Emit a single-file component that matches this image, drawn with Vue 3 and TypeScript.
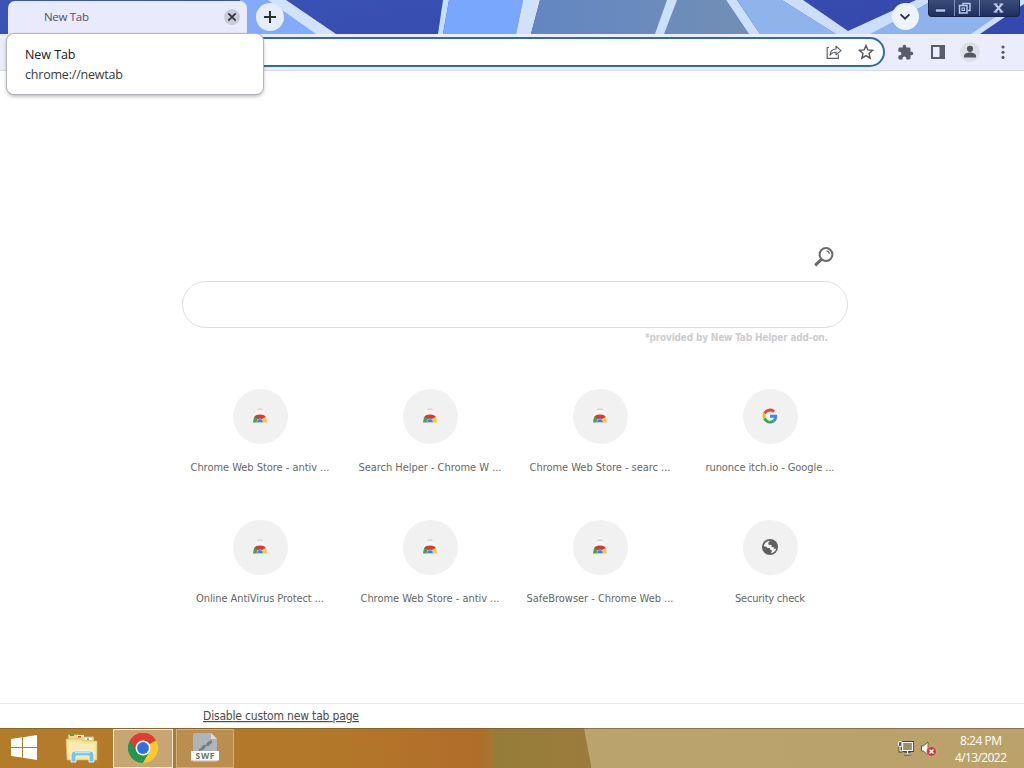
<script setup lang="ts">
type IconKind = 'store' | 'google' | 'globe'
interface Tile {
  label: string
  icon: IconKind
  width: number
}

const tiles: Tile[] = [
  { label: 'Chrome Web Store - antiv ...', icon: 'store', width: 139 },
  { label: 'Search Helper - Chrome W ...', icon: 'store', width: 143 },
  { label: 'Chrome Web Store - searc ...', icon: 'store', width: 141 },
  { label: 'runonce itch.io - Google ...', icon: 'google', width: 129 },
  { label: 'Online AntiVirus Protect ...', icon: 'store', width: 128 },
  { label: 'Chrome Web Store - antiv ...', icon: 'store', width: 139 },
  { label: 'SafeBrowser - Chrome Web ...', icon: 'store', width: 147 },
  { label: 'Security check', icon: 'globe', width: 70 },
]
</script>

<template>
  <div class="screen">
    <header class="strip">
      <svg class="wallpaper" width="1024" height="34" viewBox="0 0 1024 34">
        <defs>
          <linearGradient id="deep" x1="0" x2="1" y1="0" y2="0.2">
            <stop offset="0" stop-color="#3a55b4" />
            <stop offset="1" stop-color="#3648ad" />
          </linearGradient>
          <linearGradient id="slate" x1="0" x2="1" y1="0" y2="0">
            <stop offset="0" stop-color="#6386c2" />
            <stop offset="1" stop-color="#718fb5" />
          </linearGradient>
        </defs>
        <rect width="1024" height="34" fill="url(#deep)" />
        <path d="M240 0H275L320 34H240Z" fill="#83abfa" />
        <path d="M268 0H286L336 34H316Z" fill="#d0e2fc" />
        <path d="M443 0H449L443 34H438Z" fill="#c6defe" />
        <path d="M449 0H523L516 34H443Z" fill="#79a7fd" />
        <path d="M523 0H540L531 34H516Z" fill="#d1e0fb" />
        <path d="M540 0H726L749 34H531Z" fill="url(#slate)" />
        <path d="M667 0H677L664 34H655Z" fill="#cbe1fb" />
        <path d="M726 0H737L760 34H749Z" fill="#cbe1fb" />
        <path d="M737 0H782L836 34H760Z" fill="#8fb3eb" />
        <path d="M782 0H803L848 31L916 0H934L872 34H836Z" fill="#cbdffc" />
        <path d="M934 0H1024V0L973 34H870Z" fill="#8eb2ec" />
        <path d="M1020 0H1024V4L980 34H971Z" fill="#cbdffc" />
      </svg>
      <div class="tab">
        <span class="tab-title"><svg width="46" height="18"><text x="0" y="13" textLength="45">New Tab</text></svg></span>
        <span class="tab-close">
          <svg width="16" height="16" viewBox="0 0 16 16"><path d="M4.300 4.300l7.400 7.400M11.700 4.300l-7.400 7.400" stroke="#30313c" stroke-width="1.700" /></svg>
        </span>
      </div>
      <span class="new-tab">
        <svg width="28" height="28" viewBox="0 0 28 28"><path d="M14 8v12M8 14h12" stroke="#2b2e3b" stroke-width="2" /></svg>
      </span>
      <span class="strip-gap"></span>
      <span class="tab-search">
        <svg width="26" height="26" viewBox="0 0 26 26"><path d="M8.600 11.300l4.400 4.400 4.400-4.400" fill="none" stroke="#29303a" stroke-width="1.900" /></svg>
      </span>
      <div class="win-buttons">
        <span class="win-min"><svg width="25" height="16"><rect x="6.500" y="9" width="10" height="3" fill="#b3c6ec" stroke="#15203f" stroke-width=".5" /></svg></span>
        <span class="win-max"><svg width="24" height="16" fill="none" stroke="#b8c9ec" stroke-width="1.500"><path d="M8 5V3.500H15V10.500H13" /><rect x="4.500" y="5.500" width="7.500" height="7.500" /><rect x="7" y="8" width="2.500" height="2.500" stroke-width="1" /></svg></span>
        <span class="win-close"><svg width="40" height="16"><path d="M15 4l7 8M22 4l-7 8" stroke="#bdccee" stroke-width="2" /><path d="M13.500 4h4M19.500 4h4M13.500 12h4M19.500 12h4" stroke="#bdccee" stroke-width="1" /></svg></span>
      </div>
    </header>

    <div class="toolbar">
      <div class="omnibox">
        <svg width="16" height="16" viewBox="0 0 16 16" fill="none" stroke="#5f6368" stroke-width="1.200"><path d="M3 3.500H1.200V14.400H12.300V10.500" /><path d="M4 11C4.300 7.300 6.500 5.200 10 5V2.200L15 6.600 10 10.700V8C7.500 8 5.700 9 4 11Z" stroke-linejoin="round" /></svg>
        <svg class="star" width="16" height="16" viewBox="0 0 16 16"><path d="M8 1.500L9.850 5.900 14.700 6.300 11 9.450 12.150 14.200 8 11.650 3.850 14.200 5 9.450 1.300 6.300 6.150 5.900Z" fill="none" stroke="#50535b" stroke-width="1.400" /></svg>
      </div>
      <svg class="tool puzzle" width="17" height="17" viewBox="0 0 24 24"><path d="M20.500 11H19V7c0-1.100-.9-2-2-2h-4V3.500a2.500 2.500 0 0 0-5 0V5H4c-1.100 0-2 .9-2 2v3.800h1.500a2.700 2.700 0 0 1 0 5.400H2V20c0 1.100.9 2 2 2h3.800v-1.500a2.700 2.700 0 0 1 5.400 0V22H17c1.100 0 2-.9 2-2v-4h1.500a2.500 2.500 0 0 0 0-5z" fill="#5a5c69" /></svg>
      <svg class="tool" width="16" height="16" viewBox="0 0 16 16"><path d="M1 1h14v14H1zM3 3v10h6.500V3z" fill="#5a5c69" fill-rule="evenodd" /></svg>
      <span class="profile"><svg width="20" height="20" viewBox="0 0 20 20" fill="#535560"><circle cx="10" cy="6.800" r="3.100" /><path d="M4 15.500V14c0-2.300 3.500-3.400 6-3.400s6 1.100 6 3.400v1.500z" /></svg></span>
      <svg class="tool" width="6" height="16" viewBox="0 0 6 16" fill="#555762"><circle cx="3" cy="3" r="1.550" /><circle cx="3" cy="8.200" r="1.550" /><circle cx="3" cy="13.400" r="1.550" /></svg>
    </div>

    <main class="page">
      <section class="search">
        <div class="search-icon">
          <svg width="22" height="22" viewBox="0 0 22 22" fill="none" stroke="#696969"><circle cx="13" cy="8.500" r="6.400" stroke-width="2" /><path d="M8.500 13.200L2.200 19.400" stroke-width="3" /><path d="M13.500 5.200c1.700 0 2.700 1.100 2.800 2.700" stroke-width="1.200" /></svg>
        </div>
        <div class="search-box"></div>
        <div class="credit"><svg width="185" height="15"><text x="0" y="11" textLength="183">*provided by New Tab Helper add-on.</text></svg></div>
      </section>
      <section class="tiles">
        <div v-for="(tile, i) in tiles" :key="i" class="tile">
          <span class="disc">
            <svg v-if="tile.icon === 'store'" width="16" height="18" viewBox="0 0 16 18">
              <path d="M2.500 8.500L4.500 3h7l2 5.500z" fill="#faf5f5" />
              <path d="M5.500 3Q8 .8 10.500 3" fill="none" stroke="#ced1d3" stroke-width="1.200" />
              <path d="M2 10.500Q3 7.500 8 7.500T14 10.500L11 12H5z" fill="#d23d32" />
              <path d="M2.400 9.700Q1.200 12 1 15.500H6L5.500 11.500z" fill="#46a05a" />
              <path d="M13.700 10Q15 12 15 15.500H10L10.500 11.500z" fill="#f5ca3f" />
              <path d="M4.800 15.500a3.200 3.800 0 0 1 6.400 0z" fill="#4182d5" stroke="#dde3ee" stroke-width=".5" />
            </svg>
            <svg v-else-if="tile.icon === 'google'" width="16" height="16" viewBox="0 0 48 48">
              <path fill="#EA4335" d="M24 10.500c3.500 0 6.700 1.200 9.200 3.600l6.200-6.200A22.500 22.500 0 0 0 4 14l7.300 5.600C13 14.300 18 10.500 24 10.500z" />
              <path fill="#FBBC05" d="M11.200 28.300a13.500 13.500 0 0 1 0-8.700L4 14a22.500 22.500 0 0 0 0 20z" />
              <path fill="#34A853" d="M24 46.500c6 0 11.200-2 14.900-5.400L31.800 35.600A13.300 13.300 0 0 1 11.200 28.300L4 34a22.400 22.400 0 0 0 20 12.500z" />
              <path fill="#4285F4" d="M45.500 24.500c0-1.600-.1-3.100-.4-4.500H24v8.900h12.200a10.500 10.500 0 0 1-4.400 6.700l7.100 5.500c4.200-3.900 6.600-9.600 6.600-16.600z" />
            </svg>
            <svg v-else width="18" height="18" viewBox="0 0 18 18">
              <circle cx="9" cy="9" r="8" fill="#5f6062" />
              <path d="M9.300 2.800L7.200 4.700l.3 2 3 .2v2h2.200v1.800h2.500Q14 14.600 10 15.200L11 12.600 9 11.500V10H6.500L5 8.500H2.800Q3.500 3.200 9.300 2.800Z" fill="#f4f4f4" />
            </svg>
          </span>
          <svg class="label" width="150" height="18"><text x="75" y="13" text-anchor="middle" :textLength="tile.width">{{ tile.label }}</text></svg>
        </div>
      </section>
    </main>

    <footer class="footer">
      <a class="disable"><svg width="158" height="20"><text x="0" y="14" textLength="156">Disable custom new tab page</text></svg></a>
    </footer>

    <nav class="taskbar">
      <svg class="desk" width="1024" height="40" viewBox="0 0 1024 40">
        <defs>
          <linearGradient id="amber" x1="0" x2="1" y1="0" y2="0">
            <stop offset="0" stop-color="#b37c2a" />
            <stop offset=".7" stop-color="#b37729" />
            <stop offset=".97" stop-color="#b06c2b" />
            <stop offset="1" stop-color="#9f7a33" />
          </linearGradient>
          <linearGradient id="sand" x1="0" x2="1" y1="0" y2="0">
            <stop offset="0" stop-color="#baa46e" />
            <stop offset="1" stop-color="#bba16a" />
          </linearGradient>
          <linearGradient id="olive" x1="0" x2="1" y1="0" y2="0">
            <stop offset="0" stop-color="#967d37" />
            <stop offset="1" stop-color="#9c7b3e" />
          </linearGradient>
        </defs>
        <rect width="494" height="40" fill="url(#amber)" />
        <path d="M493 0H585L592 40H493Z" fill="url(#olive)" />
        <path d="M584 0H1024V40H591.500Z" fill="url(#sand)" />
        <rect width="1024" height="1" fill="#66502f" opacity=".55" />
      </svg>
      <div class="task start">
        <svg width="28" height="28" viewBox="0 0 28 28" fill="#fff"><path d="M1 5l11-1.700V13H1zM13 3.200L27 1v12H13zM1 14h11v9.500L1 22zM13 14h14v12l-14-2.200z" /></svg>
      </div>
      <div class="task explorer">
        <svg width="34" height="34" viewBox="0 0 34 34">
          <path d="M3 3.500h10l2 2h14v5H3z" fill="#f3d787" stroke="#b79140" stroke-width=".7" />
          <path d="M5 3h4v2H5z" fill="#49a34a" /><path d="M12 4h7v2h-7z" fill="#fff" /><path d="M13 5h3v1.500h-3z" fill="#d84e38" /><path d="M20 7h7v2h-7z" fill="#f8fcff" /><path d="M22 7.500h2v1.500h-2z" fill="#3da1cd" />
          <path d="M1 8h15l2 2h14v19H2z" fill="#f6e69d" stroke="#d3b563" stroke-width=".7" />
          <path d="M4 11h10l2 2h13v10H4z" fill="#fbf0bc" opacity=".6" />
          <path d="M6 31V24q0-4 4-4h15q4 0 4 4v7h-5v-6H11v6z" fill="#79c2e4" stroke="#e4f5fb" stroke-width="1" />
          <path d="M10 21.500h15" stroke="#bce8f5" stroke-width="1.500" />
        </svg>
      </div>
      <div class="task chrome">
        <svg width="30" height="30" viewBox="0 0 48 48">
          <path d="M24 24L3.200 12A24 24 0 0 1 44.800 12z" fill="#df3d33" />
          <path d="M24 24L3.200 12A24 24 0 0 0 24 48l10.400-18z" fill="#239650" />
          <path d="M24 24L44.800 12A24 24 0 0 1 24 48l10.400-18z" fill="#f9c92d" />
          <path d="M24 12h20.800A24 24 0 0 0 3.200 12l10.400 18z" fill="#df3d33" />
          <circle cx="24" cy="24" r="12" fill="#fff" /><circle cx="24" cy="24" r="9.500" fill="#2f72df" />
        </svg>
      </div>
      <div class="task swf">
        <svg width="30" height="32" viewBox="0 0 30 32">
          <path d="M3 3q0-2 2-2h16l6 6v23H3z" fill="#aeb5b8" /><path d="M21 1v6h6z" fill="#d9dedf" />
          <path d="M9 17q3-1 4-4h3q1-4 6-5v3q-3 1-3 3h-3q-1 4-7 5z" fill="#757e83" />
          <rect x="1" y="19" width="28" height="9.500" fill="#fcfdfb" />
          <text x="15" y="27" text-anchor="middle" textLength="19" class="swf-text">SWF</text>
        </svg>
      </div>
      <span class="task-gap"></span>
      <svg class="tray" width="17" height="16" viewBox="0 0 17 16"><path d="M5.500 2.500H15.500V10.500H5.500zM10.500 10v4M7 14h7M3 6v5h2.500" fill="none" stroke="#4a3e2b" stroke-width="3" /><path d="M5.500 2.500H15.500V10.500H5.500z" fill="#a08e6b" /><path d="M5.500 2.500H15.500V10.500H5.500zM10.500 10v4M7 14h7M3 6v5h2.500" fill="none" stroke="#fff" stroke-width="1.200" /><rect x="1.500" y="1.500" width="3.500" height="5" rx="1" fill="#6d5f49" stroke="#fff" /></svg>
      <svg class="tray sound" width="17" height="16" viewBox="0 0 17 16"><path d="M1.500 5h2L8 1v13l-4.500-4h-2z" fill="#fff" stroke="#5b492d" stroke-width=".8" /><circle cx="11.500" cy="10.500" r="4.900" fill="#d0392b" stroke="#f0c0ae" stroke-width=".6" /><path d="M9.500 8.500l4 4M13.500 8.500l-4 4" stroke="#fff" stroke-width="1.500" /></svg>
      <div class="clock">
        <svg width="54" height="36"><text x="27" y="14" text-anchor="middle" textLength="42">8:24 PM</text><text x="27" y="31" text-anchor="middle" textLength="52">4/13/2022</text></svg>
      </div>
    </nav>

    <div class="tooltip">
      <svg width="110" height="42"><text x="0" y="14" textLength="50.500" class="tip-title">New Tab</text><text x="0" y="34" textLength="98">chrome://newtab</text></svg>
    </div>
  </div>
</template>

<style>
html,
body {
  margin: 0;
  overflow: hidden;
}
</style>

<style scoped>
* { box-sizing: border-box; }
svg { display: block; flex: none; }
.screen {
  position: relative;
  display: flex;
  flex-direction: column;
  width: 1024px;
  height: 768px;
  background: #fff;
  font-family: "Open Sans", "Noto Sans", sans-serif;
}
.strip { position: relative; display: flex; height: 34px; padding-left: 8px; flex: none; border-bottom: 1px solid #9ba8cf; }
.wallpaper { position: absolute; left: 0; top: 0; }
.strip > :not(.wallpaper) { position: relative; }
.tab {
  display: flex;
  align-items: center;
  justify-content: space-between;
  width: 239px;
  height: 33px;
  margin-top: 1px;
  padding: 0 7px 2px 36px;
  border-radius: 7px 7px 0 0;
  background: #e9eafb;
}
.tab-title { font-size: 11.5px; fill: #4e5268; }
.tab-close { border-radius: 50%; background: #cbcbdc; }
.new-tab { width: 28px; height: 28px; margin: 3px 0 0 9px; border-radius: 50%; background: #e3edfc; }
.strip-gap { flex: 1; }
.tab-search { width: 27px; height: 27px; margin: 3px 9px 0 0; border-radius: 50%; background: #edf3fb; }
.win-buttons { display: flex; width: 92px; height: 17px; margin-right: 4px; border: 1px solid #17264f; border-top: 0; border-radius: 0 0 4px 4px; background: linear-gradient(#3a4c79, #202f61); overflow: hidden; }
.win-buttons span { border-right: 1px solid #8393b8; }
.win-buttons .win-close { border: 0; }
.toolbar { display: flex; align-items: center; height: 37px; flex: none; background: #ebedfc; border-bottom: 1px solid #d5d8e5; }
.omnibox { display: flex; align-items: center; justify-content: flex-end; width: 877px; height: 30px; margin-left: 8px; padding-right: 9px; gap: 16px; border: 2px solid #2d69b4; border-radius: 15px; background: #fff; }
.tool { margin-left: 16px; }
.puzzle { margin-left: 12px; }
.profile { margin-left: 14px; border-radius: 50%; background: #dddfea; }
.profile + .tool { margin-left: 19.5px; }
.page { display: flex; flex-direction: column; align-items: center; height: 632px; flex: none; padding: 175px 0 0 6px; }
.search { width: 666px; }
.search-icon { display: flex; justify-content: flex-end; height: 35px; padding-right: 13px; }
.search-box { height: 47px; border: 1px solid #dedede; border-radius: 24px; background: #fff; }
.credit { display: flex; justify-content: flex-end; padding: 2px 18px 0 0; font: bold 10px "DejaVu Sans Condensed", "DejaVu Sans", sans-serif; fill: #cdcdcd; }
.tiles { display: grid; grid-template-columns: repeat(4, 170px); grid-auto-rows: 131px; margin-top: 44px; }
.tile { display: flex; flex-direction: column; align-items: center; }
.disc { display: flex; align-items: center; justify-content: center; width: 55px; height: 55px; padding-bottom: 1px; border-radius: 50%; background: #f1f1f1; }
.label { margin-top: 14px; font: 11px "DejaVu Sans Condensed", "DejaVu Sans", sans-serif; fill: #686868; }
.footer { height: 25px; flex: none; padding: 2px 0 0 203px; border-top: 1px solid #e9e9e9; }
.disable { display: block; width: 158px; font: 12px "DejaVu Sans Condensed", "DejaVu Sans", sans-serif; fill: #4b4b4b; }
.disable text { text-decoration: underline; }
.taskbar { position: relative; display: flex; height: 40px; flex: none; }
.desk { position: absolute; inset: 0; }
.taskbar > :not(.desk) { position: relative; }
.task { display: flex; align-items: center; justify-content: center; height: 40px; }
.start { width: 48px; padding-bottom: 1px; }
.explorer { width: 62px; margin-left: 1px; margin-right: 2px; padding-left: 4px; }
.chrome { width: 60px; height: 39px; margin-top: 1px; padding-bottom: 2px; border: 1px solid #f6efdd; background: rgba(213, 195, 165, .6); }
.swf { width: 58px; height: 39px; margin: 1px 0 0 3px; padding-bottom: 2px; border: 1px solid #cdb17c; background: rgba(190, 161, 112, .55); }
.swf-text { font: bold 8.5px "Open Sans", sans-serif; fill: #6b7276; }
.task-gap { flex: 1; }
.tray { margin-top: 12px; }
.sound { margin-left: 6px; margin-top: 13px; }
.clock { margin: 3px 16px 0 17px; font-size: 12px; fill: #fff; }
.tooltip { position: absolute; left: 7px; top: 34px; width: 256px; height: 60px; padding: 11px 18px; border-radius: 7px; background: #fff; box-shadow: 0 0 0 1px #b3b5bd, 0 2px 4px rgba(0, 0, 0, .35); font-size: 12.5px; fill: #393939; }
.tip-title { fill: #202020; }
</style>
